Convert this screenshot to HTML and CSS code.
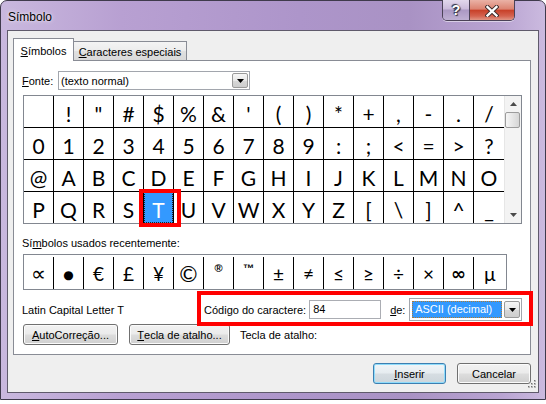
FILE: index.html
```html
<!DOCTYPE html>
<html lang="pt">
<head>
<meta charset="utf-8">
<title>Símbolo</title>
<link rel="stylesheet" href="styles.css">
</head>
<body>
<div class="window">
  <div class="titlebar">
    <span class="title">Símbolo</span>
    <div class="caption-btns">
      <div class="cap-help">?</div>
      <div class="cap-close">
        <svg width="14" height="12" viewBox="0 0 14 12"><path d="M2.5 2 L11.5 10.5 M11.5 2 L2.5 10.5" stroke="#3a2a2a" stroke-width="4.2" stroke-linecap="square"/><path d="M2.5 2 L11.5 10.5 M11.5 2 L2.5 10.5" stroke="#ffffff" stroke-width="2.4" stroke-linecap="square"/></svg>
      </div>
    </div>
  </div>
  <div class="client">
    <div class="tabs">
      <div class="tab active"><span><u>S</u>ímbolos</span></div>
      <div class="tab inactive"><span><u>C</u>aracteres especiais</span></div>
    </div>
    <div class="panel">
      <div class="font-row">
        <span class="font-lbl"><u>F</u>onte:</span>
        <div class="combo font-combo">
          <span class="combo-text">(texto normal)</span>
          <span class="drop"><svg width="7" height="4" viewBox="0 0 7 4"><path d="M0 0 H7 L3.5 4 Z" fill="#000"/></svg></span>
        </div>
      </div>
      <div class="grid-box">
        <div class="charmap">
          <div class="cell">&nbsp;</div><div class="cell">!</div><div class="cell">&quot;</div><div class="cell">#</div><div class="cell">$</div><div class="cell">%</div><div class="cell">&amp;</div><div class="cell">'</div><div class="cell">(</div><div class="cell">)</div><div class="cell">*</div><div class="cell">+</div><div class="cell">,</div><div class="cell">-</div><div class="cell">.</div><div class="cell">/</div>
          <div class="cell">0</div><div class="cell">1</div><div class="cell">2</div><div class="cell">3</div><div class="cell">4</div><div class="cell">5</div><div class="cell">6</div><div class="cell">7</div><div class="cell">8</div><div class="cell">9</div><div class="cell">:</div><div class="cell">;</div><div class="cell">&lt;</div><div class="cell">=</div><div class="cell">&gt;</div><div class="cell">?</div>
          <div class="cell">@</div><div class="cell">A</div><div class="cell">B</div><div class="cell">C</div><div class="cell">D</div><div class="cell">E</div><div class="cell">F</div><div class="cell">G</div><div class="cell">H</div><div class="cell">I</div><div class="cell">J</div><div class="cell">K</div><div class="cell">L</div><div class="cell">M</div><div class="cell">N</div><div class="cell">O</div>
          <div class="cell">P</div><div class="cell">Q</div><div class="cell">R</div><div class="cell">S</div><div class="cell sel">T<span class="annot-cell"></span></div><div class="cell">U</div><div class="cell">V</div><div class="cell">W</div><div class="cell">X</div><div class="cell">Y</div><div class="cell">Z</div><div class="cell">[</div><div class="cell">\</div><div class="cell">]</div><div class="cell">^</div><div class="cell">_</div>
        </div>
        <div class="vscroll">
          <div class="sb-btn"><svg width="7" height="4" viewBox="0 0 7 4"><path d="M0 4 H7 L3.5 0 Z" fill="#4a4a4a"/></svg></div>
          <div class="sb-thumb"></div>
          <div class="sb-track"></div>
          <div class="sb-btn"><svg width="7" height="4" viewBox="0 0 7 4"><path d="M0 0 H7 L3.5 4 Z" fill="#4a4a4a"/></svg></div>
        </div>
      </div>
      <div class="recent-lbl">Sí<u>m</u>bolos usados recentemente:</div>
      <div class="recent">
        <div class="rcell prop">∝</div><div class="rcell bullet">●</div><div class="rcell">€</div><div class="rcell">£</div><div class="rcell">¥</div><div class="rcell copy">©</div><div class="rcell sup">®</div><div class="rcell sup tm">™</div><div class="rcell">±</div><div class="rcell">≠</div><div class="rcell">≤</div><div class="rcell">≥</div><div class="rcell">÷</div><div class="rcell">×</div><div class="rcell inf">∞</div><div class="rcell">µ</div>
      </div>
      <div class="info-row">
        <span class="char-name">Latin Capital Letter T</span>
        <div class="code-group">
          <span class="code-lbl">Códi<u>g</u>o do caractere:</span>
          <div class="input">84</div>
          <span class="de-lbl"><u>d</u>e:</span>
          <div class="combo enc-combo">
            <span class="sel-text">ASCII (decimal)</span>
            <span class="drop"><svg width="7" height="4" viewBox="0 0 7 4"><path d="M0 0 H7 L3.5 4 Z" fill="#000"/></svg></span>
          </div>
          <div class="annot"></div>
        </div>
      </div>
      <div class="btn-row">
        <div class="btn btn-auto"><u>A</u>utoCorreção...</div>
        <div class="btn btn-key"><u>T</u>ecla de atalho...</div>
        <span class="key-lbl">Tecla de atalho:</span>
      </div>
    </div>
    <div class="dlg-btns">
      <div class="btn btn-insert"><u>I</u>nserir</div>
      <div class="btn btn-cancel">Cancelar</div>
    </div>
    <svg class="grip" width="11" height="11" viewBox="0 0 11 11">
      <g fill="#b8b8b8"><rect x="8" y="0" width="2" height="2"/><rect x="5" y="3" width="2" height="2"/><rect x="8" y="3" width="2" height="2"/><rect x="2" y="6" width="2" height="2"/><rect x="5" y="6" width="2" height="2"/><rect x="8" y="6" width="2" height="2"/></g>
      <g fill="#6f6f6f"><rect x="8" y="0" width="1" height="1"/><rect x="5" y="3" width="1" height="1"/><rect x="8" y="3" width="1" height="1"/><rect x="2" y="6" width="1" height="1"/><rect x="5" y="6" width="1" height="1"/><rect x="8" y="6" width="1" height="1"/></g>
    </svg>
  </div>
</div>
</body>
</html>
```

FILE: styles.css
```css
* { box-sizing: border-box; }

body {
  margin: 0;
  background: #ffffff;
  font-family: "Liberation Sans", Arial, sans-serif;
  font-size: 11px;
  color: #000;
  white-space: nowrap;
}

u { text-decoration: underline; text-underline-offset: 1px; }

.window {
  width: 546px;
  height: 400px;
  border: 1px solid #3f3a4c;
  border-radius: 7px 7px 0 0;
  padding: 0 6px 6px 6px;
  display: flex;
  flex-direction: column;
  background: linear-gradient(90deg, #c9b8de 0%, #b8a0d2 22%, #ad95ca 55%, #a992c4 75%, #b9a4d2 92%, #cbbadf 100%);
}

.titlebar {
  height: 29px;
  display: flex;
  align-items: flex-start;
}

.title {
  font-size: 12px;
  margin: 9px 0 0 1px;
  text-shadow: 0 0 5px rgba(255,255,255,0.8), 0 0 2px rgba(255,255,255,0.6);
}

.caption-btns {
  margin-left: auto;
  margin-right: 24px;
  margin-top: -1px;
  display: flex;
  height: 21px;
  border: 1px solid #4b4257;
  border-top: none;
  border-radius: 0 0 5px 5px;
  overflow: hidden;
  box-shadow: 0 1px 0 rgba(255,255,255,0.5);
}

.cap-help {
  width: 27px;
  height: 20px;
  border-right: 1px solid #4b4257;
  background: linear-gradient(#e2d8ec 0%, #cbbbdb 45%, #ab98c3 50%, #bfb0d3 100%);
  color: #fff;
  font-weight: bold;
  font-size: 14px;
  text-align: center;
  line-height: 20px;
  text-shadow: 0 0 1px #303040, 1px 1px 1px #303040, -1px -1px 1px #303040;
}

.cap-close {
  width: 44px;
  height: 20px;
  background: linear-gradient(#eab2a6 0%, #dc8371 45%, #c8412a 52%, #d4624f 80%, #e09585 100%);
  display: flex;
  align-items: center;
  justify-content: center;
  padding-top: 2px;
}

.client {
  flex: 1;
  background: #efefef;
  border: 1px solid #5f5a6b;
  padding: 7px 7px 0 5px;
  display: flex;
  flex-direction: column;
  position: relative;
}

.tabs {
  height: 22px;
  display: flex;
  align-items: flex-end;
}

.tab {
  display: flex;
  justify-content: center;
  align-items: center;
  border: 1px solid #898c95;
  border-bottom: none;
}

.tab.active {
  width: 61px;
  height: 23px;
  margin-bottom: -1px;
  background: #fff;
  position: relative;
  z-index: 1;
  padding-top: 1px;
}

.tab.inactive {
  width: 113px;
  height: 19px;
  border-left: none;
  background: linear-gradient(#f4f4f4 0%, #ececec 50%, #e0e0e0 51%, #d9d9d9 100%);
  padding-top: 2px;
}

.panel {
  height: 295px;
  border: 1px solid #898c95;
  background: #fff;
  padding: 10px 0 0 8px;
  display: flex;
  flex-direction: column;
}

.font-row {
  height: 19px;
  display: flex;
  align-items: center;
}

.font-lbl { width: 36px; }

.combo {
  display: flex;
  align-items: center;
  border: 1px solid #a2a6ad;
  background: #fff;
  flex-shrink: 0;
}

.font-combo {
  width: 192px;
  height: 19px;
  padding: 0 0 0 2px;
}

.combo-text { flex: 1; }

.drop {
  width: 16px;
  height: 15px;
  border: 1px solid #9a9a9a;
  border-radius: 2px;
  background: linear-gradient(#f6f6f6 0%, #e8e8e8 50%, #d8d8d8 51%, #cdcdcd 100%);
  display: flex;
  align-items: center;
  justify-content: center;
  margin-right: 1px;
  flex-shrink: 0;
}

.grid-box {
  margin-top: 5px;
  margin-left: 1px;
  width: 499px;
  height: 129px;
  border: 1px solid #828790;
  display: flex;
}

.charmap {
  display: grid;
  grid-template-columns: repeat(15, 29px) 30px;
  grid-auto-rows: 31px;
  gap: 1px;
  background: #000;
  width: 480px;
  height: 127px;
}

.cell {
  background: #fff;
  display: flex;
  align-items: center;
  justify-content: center;
  font-family: "Lato", "Open Sans", sans-serif;
  font-size: 21px;
  line-height: 1;
  padding-top: 3px;
}

.cell.sel {
  background: #3399ff;
  color: #fff;
  border: 1px dotted #202020;
  position: relative;
}

.annot-cell {
  position: absolute;
  left: -6px;
  top: -4px;
  width: 42px;
  height: 38px;
  border: 4px solid #ff0000;
}

.vscroll {
  width: 17px;
  height: 127px;
  background: #f3f3f3;
  display: flex;
  flex-direction: column;
  border-left: 1px solid #e6e6e6;
}

.sb-btn {
  height: 16px;
  display: flex;
  align-items: center;
  justify-content: center;
}

.sb-thumb {
  height: 16px;
  margin: 0 1px 0 0;
  border: 1px solid #9c9c9c;
  border-radius: 2px;
  background: linear-gradient(90deg, #f6f6f6 0%, #e6e6e6 50%, #d6d6d6 100%);
}

.sb-track { flex: 1; }

.recent-lbl {
  margin-top: 12px;
  line-height: 14px;
}

.recent {
  margin-top: 4px;
  margin-left: 1px;
  width: 484px;
  height: 36px;
  border: 1px solid #828790;
  padding-top: 2px;
  display: grid;
  grid-template-columns: repeat(15, 30px) 32px;
}

.rcell {
  height: 32px;
  border-right: 1px solid #000;
  display: flex;
  align-items: center;
  justify-content: center;
  font-family: "Lato", "DejaVu Sans", sans-serif;
  font-size: 19px;
  line-height: 1;
  padding-top: 1px;
}

.rcell:last-child { border-right: none; }

.rcell.prop { font-family: "DejaVu Sans", sans-serif; font-size: 21px; padding-top: 3px; }
.rcell.bullet { font-family: "DejaVu Sans", sans-serif; font-size: 12px; padding-top: 3px; }
.rcell.copy { font-size: 22px; }
.rcell.sup { font-family: "Liberation Sans", sans-serif; font-size: 11px; align-items: flex-start; padding-top: 6px; font-weight: bold; }
.rcell.inf { font-family: "DejaVu Sans", sans-serif; font-size: 18px; font-weight: bold; }

.info-row {
  margin-top: 8px;
  height: 23px;
  display: flex;
  align-items: center;
}

.char-name { width: 182px; flex-shrink: 0; }

.code-group {
  display: flex;
  align-items: center;
  position: relative;
  height: 23px;
  flex-shrink: 0;
}

.code-lbl { flex-shrink: 0; }

.input {
  margin-left: 3px;
  width: 72px;
  height: 19px;
  border: 1px solid #abadb3;
  padding-left: 3px;
  line-height: 17px;
  flex-shrink: 0;
}

.de-lbl {
  margin-left: 9px;
  width: 19px;
  flex-shrink: 0;
}

.enc-combo {
  width: 113px;
  height: 23px;
  padding: 2px 1px 2px 2px;
}

.sel-text {
  flex: 1;
  height: 17px;
  margin-right: 2px;
  background: #3399ff;
  color: #fff;
  border: 1px dotted #b07a30;
  line-height: 15px;
  padding-left: 2px;
}

.enc-combo .drop { height: 17px; margin-right: 0; }

.annot {
  position: absolute;
  left: -7px;
  top: -7px;
  width: 336px;
  height: 35px;
  border: 4px solid #ff0000;
}

.btn-row {
  margin-top: 3px;
  height: 21px;
  display: flex;
  align-items: center;
}

.btn {
  height: 21px;
  border: 1px solid #707070;
  border-radius: 3px;
  background: linear-gradient(#f2f2f2 0%, #ebebeb 48%, #dddddd 52%, #cfcfcf 100%);
  box-shadow: inset 0 0 0 1px #fbfbfb;
  display: flex;
  align-items: center;
  justify-content: center;
  flex-shrink: 0;
}

.btn-auto { width: 95px; margin-left: 1px; }
.btn-key { width: 101px; margin-left: 11px; }
.key-lbl { margin-left: 10px; }

.dlg-btns {
  margin-top: 8px;
  display: flex;
  justify-content: flex-end;
  gap: 11px;
}

.btn-insert {
  width: 73px;
  border-color: #3c7fb1;
  box-shadow: inset 0 0 0 1px #8fdcfb;
  background: linear-gradient(#f0f5f8 0%, #e6ecf0 48%, #d6dde2 52%, #cdd6dc 100%);
}

.btn-cancel { width: 74px; }

.grip {
  position: absolute;
  right: 1px;
  bottom: 1px;
}
```
